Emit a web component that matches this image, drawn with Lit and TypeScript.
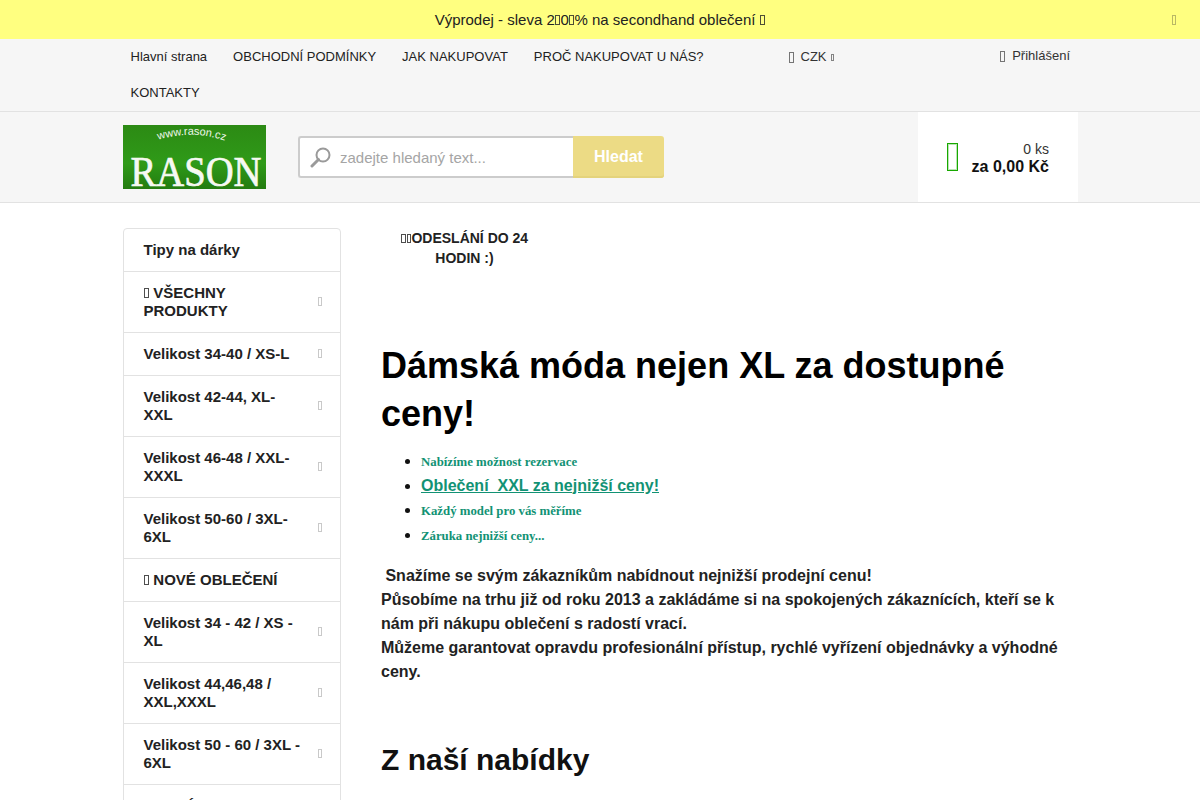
import { LitElement, html, css } from "lit";
import { customElement } from "lit/decorators.js";

type Item = { text: string; icon?: boolean; arrow?: boolean };
const items: Item[] = [
  { text: "Tipy na dárky" },
  { text: "VŠECHNY PRODUKTY", icon: true, arrow: true },
  { text: "Velikost 34-40 / XS-L", arrow: true },
  { text: "Velikost 42-44, XL-XXL", arrow: true },
  { text: "Velikost 46-48 / XXL-XXXL", arrow: true },
  { text: "Velikost 50-60 / 3XL-6XL", arrow: true },
  { text: "NOVÉ OBLEČENÍ", icon: true },
  { text: "Velikost 34 - 42 / XS - XL", arrow: true },
  { text: "Velikost 44,46,48 / XXL,XXXL", arrow: true },
  { text: "Velikost 50 - 60 / 3XL - 6XL", arrow: true },
  { text: "NOVÉ SLEVY", icon: true, arrow: true },
];

const box = html`<i class="tofu"></i>`;

@customElement("app-root")
export class AppRoot extends LitElement {
  static styles = css`
    :host {
      display: block;
      height: 800px;
      overflow: hidden;
      font-family: "Liberation Sans", Arial, sans-serif;
      color: #222;
      background: #fff;
    }
    a { color: inherit; text-decoration: none; }
    .tofu {
      display: inline-block;
      box-sizing: border-box;
      width: 0.3em;
      height: 0.68em;
      margin: 0 0.04em;
      border: 1px solid currentColor;
      vertical-align: -0.02em;
      opacity: 0.8;
    }
    .promo {
      height: 39px;
      background: #ffff80;
      display: flex;
      align-items: center;
      justify-content: center;
      position: relative;
      font-size: 15px;
      color: #222;
    }
    .promo .close {
      position: absolute;
      right: 23px;
      top: 11px;
      color: #a8a65e;
      font-size: 15px;
    }
    .nav {
      height: 72px;
      background: #f6f6f6;
      border-bottom: 1px solid #e2e2e2;
      display: flex;
      padding-left: 117.5px;
      font-size: 13px;
    }
    .nav ul {
      list-style: none;
      margin: 0;
      padding: 0;
      width: 660px;
      display: flex;
      flex-wrap: wrap;
      align-content: flex-start;
    }
    .nav li {
      padding: 0 13px;
      line-height: 36px;
      height: 36px;
    }
    .currency {
      margin-left: 11px;
      line-height: 36px;
      height: 36px;
      white-space: nowrap;
      color: #333;
    }
    .currency .g .tofu, .login .g .tofu {
      width: 5px;
      height: 11px;
      margin: 0;
      vertical-align: -2px;
    }
    .currency .g { color: #555; margin-right: 7px; }
    .currency .small { font-size: 10px; color: #666; }
    .login {
      margin-left: auto;
      margin-right: 130px;
      line-height: 34px;
      height: 34px;
      white-space: nowrap;
      color: #333;
    }
    .login .g { color: #555; margin-right: 7px; }
    .header {
      height: 90px;
      background: #f6f6f6;
      border-bottom: 1px solid #e2e2e2;
      display: flex;
      padding-left: 123px;
      align-items: flex-start;
    }
    .logo {
      display: block;
      width: 143px;
      height: 64px;
      margin-top: 13px;
      flex: none;
    }
    .search {
      display: flex;
      margin: 24px 0 0 32px;
      width: 366px;
      height: 42px;
      flex: none;
    }
    .field {
      width: 275px;
      box-sizing: border-box;
      border: 2px solid #ccc;
      border-right: 0;
      border-radius: 3px 0 0 3px;
      background: #fff;
      display: flex;
      align-items: center;
      padding-left: 10px;
      color: #a5a5a5;
      font-size: 15px;
      gap: 9px;
    }
    .btn {
      flex: 1;
      background: #ecdb85;
      box-shadow: inset 0 -2px 0 #e4d37c;
      border-radius: 0 3px 3px 0;
      color: #fff;
      font-weight: 700;
      font-size: 16px;
      display: flex;
      align-items: center;
      justify-content: center;
    }
    .cart {
      margin-left: 254px;
      width: 160px;
      height: 90px;
      background: #fff;
      box-sizing: border-box;
      padding: 0 29px;
      display: flex;
      align-items: center;
      justify-content: space-between;
      flex: none;
    }
    .cart .tofu {
      display: block;
      width: 11px;
      height: 28px;
      margin: 0;
      color: #18a800;
      box-shadow: inset 0 0 0 1px rgba(30, 170, 10, 0.3);
      opacity: 1;
    }
    .cart .sum { text-align: right; font-size: 14px; line-height: 17px; color: #333; padding-top: 3px; }
    .cart .sum b { display: block; font-size: 16px; color: #111; line-height: 18px; }
    .layout {
      display: flex;
      padding: 25px 0 0 123px;
    }
    .side {
      width: 218px;
      box-sizing: border-box;
      flex: none;
      border: 1px solid #e2e2e2;
      border-radius: 4px 4px 0 0;
    }
    .side a {
      display: flex;
      align-items: center;
      justify-content: space-between;
      padding: 12px 17px 12px 19.5px;
      border-bottom: 1px solid #e2e2e2;
      font-size: 15px;
      line-height: 18px;
      font-weight: 700;
      color: #222;
    }
    .side .label { width: 160px; }
    .side .wide .label { width: auto; }
    .side .arr { color: #bbb; font-weight: 400; font-size: 14px; margin-top: -2px; }
    .main {
      margin-left: 40px;
      width: 697px;
      color: #222;
    }
    .ship {
      width: 167px;
      text-align: center;
      font-size: 14px;
      font-weight: 700;
      line-height: 20px;
      color: #222;
    }
    h1 {
      margin: 74px 0 0;
      font-size: 36px;
      line-height: 48px;
      font-weight: 700;
      color: #000;
    }
    .perks {
      margin: 11px 0 0;
      padding: 0 0 0 40px;
      color: #111;
    }
    .perks li { height: 24.6px; line-height: 24.6px; }
    .perks .serif {
      font-family: "Liberation Serif", serif;
      font-size: 12.8px;
      font-weight: 700;
      color: #129274;
    }
    .perks a {
      font-size: 16px;
      font-weight: 700;
      color: #129274;
      text-decoration: underline;
    }
    .intro {
      margin: 17px 0 0;
      font-size: 16px;
      line-height: 24px;
      font-weight: 700;
      color: #222;
    }
    h2 {
      margin: 56px 0 0;
      font-size: 30px;
      line-height: 40px;
      font-weight: 700;
      color: #111;
    }
  `;

  render() {
    return html`
      <div class="promo">
        <span>Výprodej - sleva 2${box}0${box}% na secondhand oblečení ${box}</span>
        <span class="close">${box}</span>
      </div>
      <div class="nav">
        <ul>
          <li><a>Hlavní strana</a></li>
          <li><a>OBCHODNÍ PODMÍNKY</a></li>
          <li><a>JAK NAKUPOVAT</a></li>
          <li><a>PROČ NAKUPOVAT U NÁS?</a></li>
          <li><a>KONTAKTY</a></li>
        </ul>
        <div class="currency"><span class="g">${box}</span>CZK <span class="small">${box}</span></div>
        <div class="login"><span class="g">${box}</span>Přihlášení</div>
      </div>
      <div class="header">
        <svg class="logo" viewBox="0 0 143 64" role="img" aria-label="RASON">
          <defs>
            <linearGradient id="lg" x1="0" y1="0" x2="0" y2="1">
              <stop offset="0" stop-color="#2c8a14" />
              <stop offset="0.6" stop-color="#2f9a18" />
              <stop offset="1" stop-color="#237c10" />
            </linearGradient>
            <path id="arc" d="M 32 16 Q 70 3 105 17" fill="none" />
          </defs>
          <rect width="143" height="64" fill="url(#lg)" />
          <text font-family="Liberation Sans, sans-serif" font-size="11" fill="#eef6ea">
            <textPath href="#arc" startOffset="50%" text-anchor="middle">www.rason.cz</textPath>
          </text>
          <text x="73" y="60.7" text-anchor="middle" textLength="131" lengthAdjust="spacingAndGlyphs"
            font-family="Liberation Serif, serif" font-size="42" fill="#f6f9f2" stroke="#f6f9f2" stroke-width="0.7">RASON</text>
        </svg>
        <div class="search">
          <div class="field">
            <svg width="21" height="21" viewBox="0 0 21 21" fill="none" stroke="#9a9a9a">
              <circle cx="13" cy="8" r="6.5" stroke-width="2" />
              <path d="M8.5 12.5 L2 19" stroke-width="3" stroke-linecap="round" />
            </svg>
            <span>zadejte hledaný text...</span>
          </div>
          <div class="btn">Hledat</div>
        </div>
        <div class="cart">
          ${box}
          <div class="sum">0 ks<b>za 0,00 Kč</b></div>
        </div>
      </div>
      <div class="layout">
        <nav class="side">
          ${items.map(
            (i) => html`<a class=${i.arrow ? "" : "wide"}>
              <span class="label">${i.icon ? html`${box} ` : ""}${i.text}</span>
              ${i.arrow ? html`<span class="arr">${box}</span>` : ""}
            </a>`
          )}
        </nav>
        <main class="main">
          <div class="ship">${box}${box}ODESLÁNÍ DO 24 HODIN :)</div>
          <h1>Dámská móda nejen XL za dostupné ceny!</h1>
          <ul class="perks">
            <li><span class="serif">Nabízíme možnost rezervace</span></li>
            <li><a>Oblečení&nbsp; XXL za nejnižší ceny!</a></li>
            <li><span class="serif">Každý model pro vás měříme</span></li>
            <li><span class="serif">Záruka nejnižší ceny...</span></li>
          </ul>
          <p class="intro">
            &nbsp;Snažíme se svým zákazníkům nabídnout nejnižší prodejní cenu!<br />
            Působíme na trhu již od roku 2013 a zakládáme si na spokojených zákaznících, kteří se k nám při nákupu oblečení s radostí vrací.<br />
            Můžeme garantovat opravdu profesionální přístup, rychlé vyřízení objednávky a výhodné ceny.
          </p>
          <h2>Z naší nabídky</h2>
        </main>
      </div>
    `;
  }
}
